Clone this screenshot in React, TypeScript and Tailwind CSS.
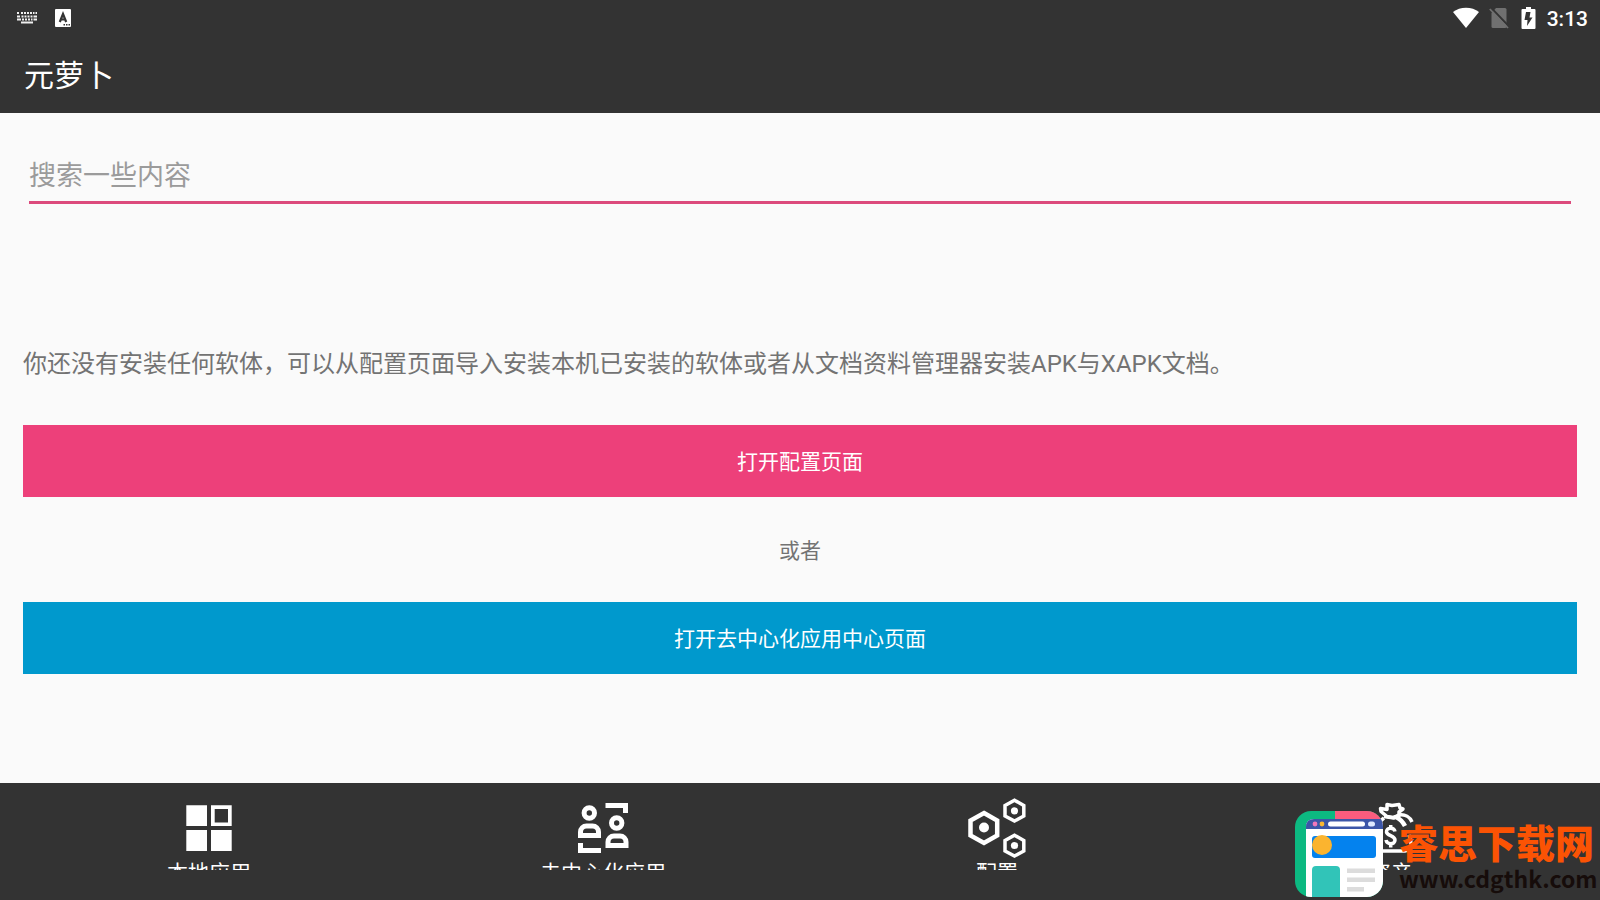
import React from "react";

const tabs = [
  { label: "本地应用", icon: <AppsIcon /> },
  { label: "去中心化应用", icon: <PeopleIcon /> },
  { label: "配置", icon: <GearsIcon /> },
  { label: "资产", icon: <MoneyIcon /> },
];

function KeyboardIcon() {
  return (
    <svg width="21" height="12" viewBox="0 0 21 12" fill="#f0f0f0" aria-hidden="true">
      <path d="M0 0h2v2H0zM4 0h2v2H4zM7 0h2v2H7zM10 0h2v2h-2zM13 0h2v2h-2zM16 0h1.500v2H16zM18.500 0H20v2h-1.500z" />
      <path d="M0 3.500h3v2H0zM4.500 3.500h2v2h-2zM7.500 3.500h2v2h-2zM10.500 3.500h2v2h-2zM13.500 3.500h2v2h-2zM16.500 3.500H20v2h-3.500z" />
      <path d="M0 6.500h4v2H0zM5 6.500h2v2H5zM8 6.500h2v2H8zM11 6.500h2v2h-2zM14 6.500h1.500v2H14zM16.500 6.500H20v2h-3.500zM4 9.500h12v2H4z" />
    </svg>
  );
}

function LetterIcon() {
  return (
    <svg width="16" height="18" viewBox="0 0 16 18" aria-hidden="true">
      <rect width="16" height="18" rx="1" fill="#fff" />
      <path d="M4.800 13 8 5l3.200 8M6 10.500h4" stroke="#333" strokeWidth="2.200" fill="none" />
      <path d="M8.500 15H10v1.500H8.500zM11 15h1.500v1.500H11zM13.500 15H15v1.500h-1.500z" fill="#333" />
    </svg>
  );
}

function AppsIcon() {
  return (
    <svg width="60" height="60" viewBox="0 0 60 60" fill="#fff" aria-hidden="true">
      <path d="M7.300 7.300h20.700v20.700H7.300zM7.300 32h20.700v21H7.300zM32 32h20.700v21H32z" />
      <path fillRule="evenodd" d="M32 7.300h20.700v20.700H32zM35.700 11v13.500h13.300V11z" />
    </svg>
  );
}

function PeopleIcon() {
  return (
    <svg width="60" height="60" viewBox="0 0 60 60" fill="none" stroke="#fff" strokeWidth="5" aria-hidden="true">
      <circle cx="16.300" cy="15" r="5.200" />
      <path d="M7.500 37.500V34a6 6 0 0 1 6-6h6a6 6 0 0 1 6 6v3.500z" />
      <path d="M7.500 45v7.500H28" />
      <circle cx="43.700" cy="25" r="5.200" />
      <path d="M35 47.500V44a6 6 0 0 1 6-6h6a6 6 0 0 1 6 6v3.500z" />
      <path d="M32.500 7.500H52.500V15" />
    </svg>
  );
}

function GearsIcon() {
  return (
    <svg width="60" height="60" viewBox="0 0 60 60" fill="none" stroke="#fff" aria-hidden="true">
      <path strokeWidth="4.500" d="M17 15 30.200 22.500V37.500L17 45 3.500 37.500V22.500z" />
      <path strokeWidth="3.500" d="M47.500 2.200 56.800 7.500V18L47.500 23 38 18V7.500zM47.500 37.200 56.800 42.500V53L47.500 58 38 53V42.500z" />
      <g fill="#fff" stroke="none">
        <circle cx="17" cy="29.500" r="5" />
        <circle cx="47.500" cy="12.800" r="3.600" />
        <circle cx="47.500" cy="47.500" r="3.600" />
      </g>
    </svg>
  );
}

function MoneyIcon() {
  return (
    <svg width="60" height="60" viewBox="0 0 60 60" fill="none" stroke="#fff" strokeWidth="3.500" strokeLinejoin="round" aria-hidden="true">
      <path d="M19.500 10.500 26 11.500V6.500l5 1 7-1 1 3.500 3 1-4 3v3.500l-6 2-6-1-6-5z" />
      <path d="M23 18.500 33 20l5-3c6-1 11 2 13 7" />
      <path strokeWidth="4.500" d="M35 19c4 2 7 5 9 9" />
      <path d="M23 20C12 28 8 36 8 44c0 6 4 9 10 9h26c4 0 6-3 6-7 0-3-1-6-2-9" />
      <path strokeWidth="3.500" d="M34 33.500c-1-5-9-4-8.500.5C26 38 34 37.500 34 42c0 5-8 5-9 0M29.700 27v4M29.700 45v4.500" />
    </svg>
  );
}

function StatusIcons() {
  return (
    <div className="flex items-center gap-2">
      <svg className="mr-[2px]" width="26" height="22" viewBox="0 0 26 22" fill="#fff" aria-label="Wi-Fi">
        <path d="M0 5C7-.8 19-.8 26 5L13 21z" />
      </svg>
      <svg width="20" height="22" viewBox="0 0 20 22" aria-label="无 SIM 卡">
        <path d="M7 1h9q1.500 0 1.500 1.500v17q0 1.500-1.500 1.500H4q-1.500 0-1.500-1.500V6z" fill="#707070" />
        <path d="M2 .8 20 19.500" stroke="#333" strokeWidth="2" />
        <path d="M.8 2 19 21" stroke="#707070" strokeWidth="1.800" />
      </svg>
      <svg className="ml-1" width="15" height="22" viewBox="0 0 15 22" aria-label="充电中">
        <path d="M5 0h5v2h3.500q1 0 1 1v18q0 1-1 1h-12q-1 0-1-1V3q0-1 1-1H5z" fill="#fff" />
        <path d="M9.500 5H5L3.500 13h3L6 19l5.500-8.500h-3z" fill="#333" />
      </svg>
    </div>
  );
}

function Watermark() {
  return (
    <div className="pointer-events-none absolute right-[6px] bottom-[2px] flex items-end gap-[15px]">
      <svg width="90" height="88" viewBox="0 0 90 88" aria-hidden="true">
        <defs>
          <clipPath id="tile">
            <rect x="1" y="1" width="88" height="86" rx="16" />
          </clipPath>
        </defs>
        <g clipPath="url(#tile)">
          <path d="M0 0h90v88H0z" fill="#0cb981" />
          <path d="M41 0h49v30H41z" fill="#fb5c7e" />
          <path d="M12 88V17q0-8 8-8h70v79z" fill="#fff" />
          <path d="M12 19v-2q0-8 8-8h70v10z" fill="#3c56a8" />
          <circle cx="21" cy="14" r="2.400" fill="#f277bb" />
          <circle cx="28" cy="14" r="2.400" fill="#fcb731" />
          <rect x="34" y="11.500" width="37" height="5" rx="2.500" fill="#fff" />
          <rect x="74" y="11.500" width="7" height="5" rx="2.500" fill="#dfe9ff" />
          <rect x="18" y="26" width="64" height="22" rx="3" fill="#0482ee" />
          <circle cx="28" cy="35" r="10" fill="#fbb42f" />
          <path d="M18 88V60q0-4 4-4h20q4 0 4 4v28z" fill="#31c4b8" />
          <path d="M53 58.500h28v4.500H53zM53 67.500h28V72H53zM53 77h17v4.500H53z" fill="#dcdcdc" />
        </g>
      </svg>
      <div className="flex w-[195px] flex-col pb-[3px] font-['Noto_Sans_CJK_SC',sans-serif]">
        <span className="text-[39px] leading-[40px] font-black whitespace-nowrap text-[#fb5304]">睿思下载网</span>
        <span className="text-[23px] leading-[34px] font-bold whitespace-nowrap text-[#160c0a]">www.cdgthk.com</span>
      </div>
    </div>
  );
}

export default function App() {
  return (
    <div className="relative flex min-h-screen flex-col bg-[#fafafa] font-[Roboto,'Noto_Sans_CJK_SC',sans-serif] text-[#737373]">
      <header className="bg-[#333] text-white">
        <div className="flex h-9 items-center justify-between pr-[12px] pl-[17px]">
          <div className="flex items-center gap-[17px]">
            <KeyboardIcon />
            <LetterIcon />
          </div>
          <div className="flex items-center gap-[11px]">
            <StatusIcons />
            <span className="pt-[2px] text-[21px] leading-6 font-medium">3:13</span>
          </div>
        </div>
        <h1 className="flex h-[77px] items-center px-6 pt-[2px] text-[30px] leading-9">元萝卜</h1>
      </header>

      <main className="flex grow flex-col px-[23px]">
        <label className="mx-[6px] mt-9 block border-b-[3px] border-[#dc4a7c]">
          <span className="sr-only">搜索</span>
          <input
            type="text"
            placeholder="搜索一些内容"
            className="block h-[52px] w-full bg-transparent pt-[2px] text-[27px] text-[#333] outline-none placeholder:text-[#9b9b9b]"
          />
        </label>
        <p className="mt-[142px] text-[24px] leading-9">
          你还没有安装任何软体，可以从配置页面导入安装本机已安装的软体或者从文档资料管理器安装APK与XAPK文档。
        </p>
        <button type="button" className="mt-[43px] h-[72px] bg-[#ed407a] pt-[3px] text-[21px] text-white">
          打开配置页面
        </button>
        <p className="pt-[38px] pb-[34px] text-center text-[21px] leading-[33px]">或者</p>
        <button type="button" className="h-[72px] bg-[#0099cd] pt-[3px] text-[21px] text-white">
          打开去中心化应用中心页面
        </button>
      </main>

      <nav className="h-[117px] bg-[#333] px-3 pt-[15px] text-white">
        <div className="grid grid-cols-4">
          {tabs.map((tab) => (
            <a key={tab.label} href="#" className="flex flex-col items-center">
              {tab.icon}
              <span className="h-3 overflow-hidden text-[21px] leading-[30px]">{tab.label}</span>
            </a>
          ))}
        </div>
      </nav>
      <Watermark />
    </div>
  );
}
